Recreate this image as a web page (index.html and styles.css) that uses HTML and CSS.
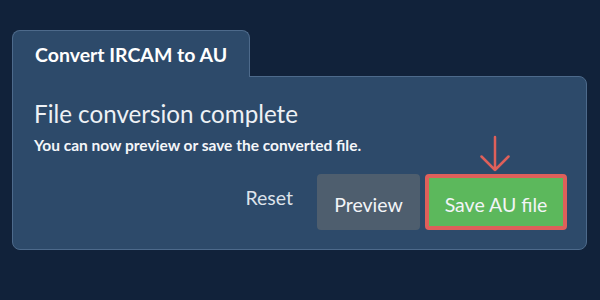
FILE: index.html
```html
<!DOCTYPE html>
<html lang="en">
<head>
    <meta charset="UTF-8">
    <title>Convert IRCAM to AU</title>
    <link rel="stylesheet" href="styles.css">
</head>
<body>
<div id="container">
    <div class="tab">Convert IRCAM to AU</div>
    <div class="panel">
        <h2 class="title">File conversion complete</h2>
        <p class="desc">You can now preview or save the converted file.</p>
        <div class="actions">
            <button class="btn btn-reset">Reset</button>
            <button class="btn btn-preview">Preview</button>
            <div class="save-wrap">
                <svg class="arrow" width="30" height="38" viewBox="0 0 30 38">
                    <path d="M15 2 L15 35 M1.5 21.5 L15 35 L28.5 21.5" fill="none" stroke="#de605a" stroke-width="2.5" stroke-linecap="round" stroke-linejoin="round"/>
                </svg>
                <button class="btn btn-save">Save AU file</button>
            </div>
        </div>
    </div>
</div>
</body>
</html>
```

FILE: styles.css
```css
*{
    margin: 0;
    padding: 0;
    box-sizing: border-box;
}
body{
    background-color: #11223a;
    font-family: Lato, "Open Sans", sans-serif;
    color: #fff;
}
#container{
    padding: 30px 13px 0 12px;
}
.tab{
    display: inline-block;
    width: 238px;
    height: 47px;
    margin-bottom: -1px;
    padding: 12px 0 0 22px;
    background-color: #2d4a6a;
    border: 1px solid #4d6a8b;
    border-bottom: none;
    border-radius: 8px 8px 0 0;
    font-size: 19.5px;
    font-weight: bold;
    position: relative;
    z-index: 1;
}
.panel{
    background-color: #2d4a6a;
    border: 1px solid #4d6a8b;
    border-radius: 0 8px 8px 8px;
    padding: 22px 19px 19px 21px;
}
.title{
    font-size: 24.2px;
    font-weight: normal;
    color: #eef1f5;
    line-height: 30px;
}
.desc{
    font-size: 15.5px;
    font-weight: bold;
    color: #f4f6f9;
    margin-top: 7px;
    line-height: 18px;
}
.actions{
    display: flex;
    justify-content: flex-end;
    align-items: center;
    gap: 5px;
    margin-top: 20px;
}
.btn{
    font-family: Lato, "Open Sans", sans-serif;
    font-size: 19.5px;
    color: #f2f4f7;
    border: none;
    height: 56px;
    cursor: pointer;
}
.btn-reset{
    background: none;
    color: #dde3ea;
    padding: 0 19px 0 0;
    margin-top: -10px;
}
.btn-preview{
    width: 103px;
    padding-top: 4px;
    background-color: #4e5e6e;
    border-radius: 4px;
}
.save-wrap{
    position: relative;
}
.btn-save{
    width: 142px;
    padding-top: 4px;
    background-color: #5cb85c;
    border: 4px solid #de605a;
    border-radius: 4px;
}
.arrow{
    position: absolute;
    left: 55px;
    top: -39px;
}
```
